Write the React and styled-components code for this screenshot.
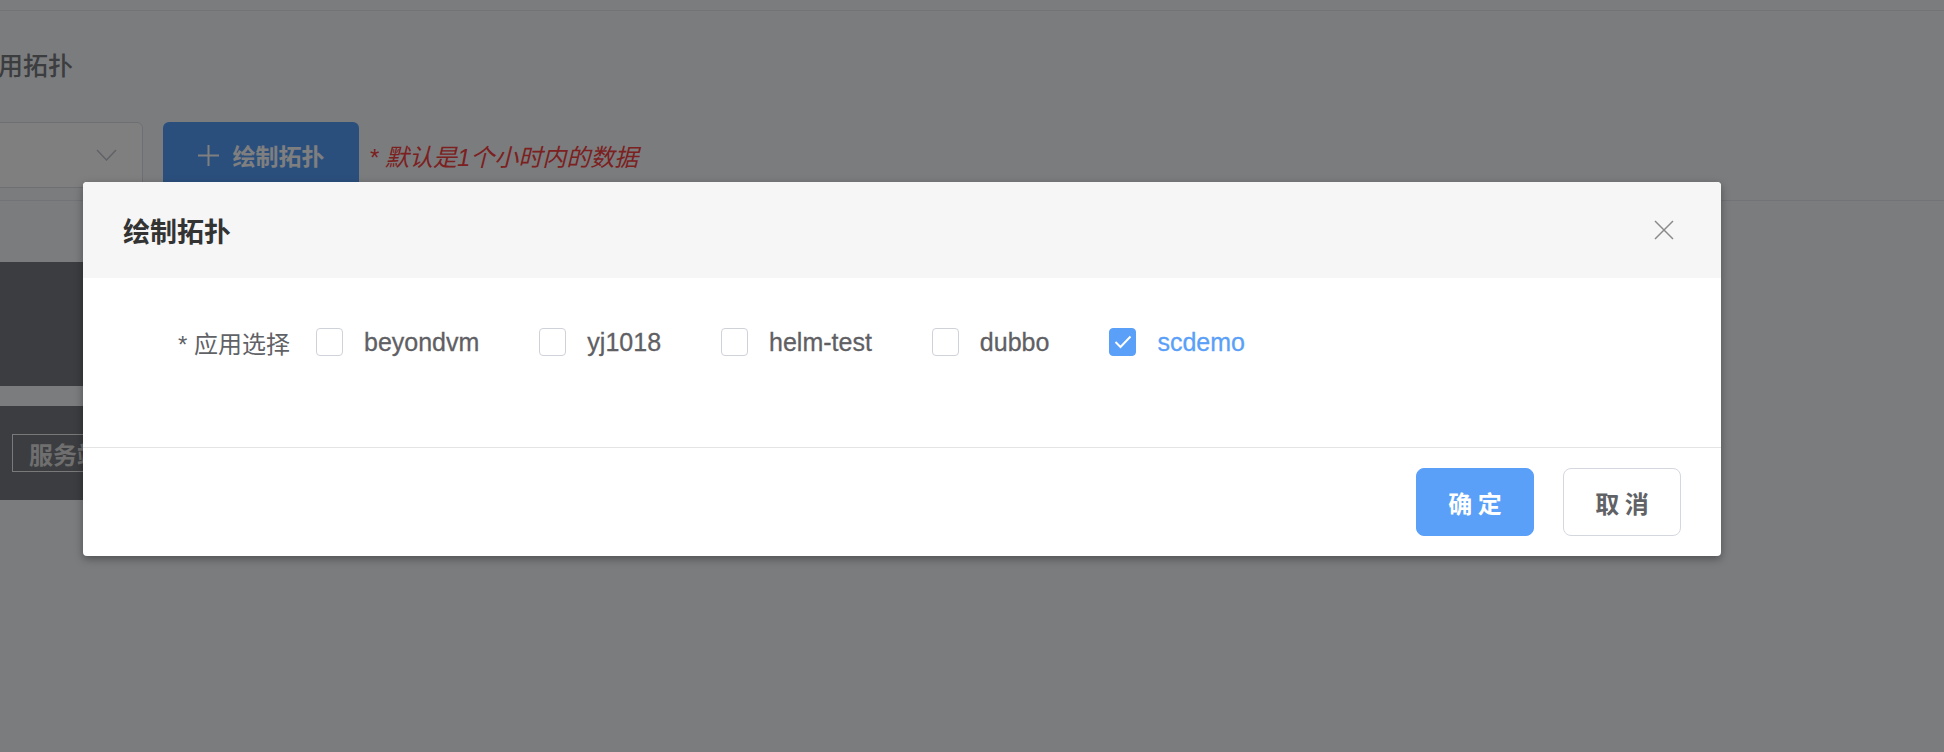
import React from "react";
import styled, { createGlobalStyle } from "styled-components";

const GlobalStyle = createGlobalStyle`
  html, body {
    margin: 0;
    padding: 0;
    overflow: hidden;
    background: #f6f8fd;
  }
  body {
    font-family: "Liberation Sans", "Noto Sans CJK SC", sans-serif;
  }
`;

const Page = styled.div`
  position: relative;
  width: 1944px;
  height: 752px;
  overflow: hidden;
  background: #f6f8fd;
`;

const TopBar = styled.div`
  height: 10px;
  border-bottom: 1px solid #e6e8ee;
`;

// the page is scrolled a little to the right, so its left edge is cut off
const Content = styled.div`
  margin-left: -27px;
`;

const PageTitle = styled.h2`
  margin: 40px 0 41px;
  font-size: 25px;
  line-height: 30px;
  font-weight: 500;
  color: #777a7f;
`;

const Toolbar = styled.div`
  display: flex;
  align-items: center;
  padding-bottom: 12px;
  border-bottom: 1px solid #e3e6ee;
`;

const Select = styled.div`
  box-sizing: border-box;
  width: 170px;
  height: 66px;
  display: flex;
  align-items: center;
  justify-content: flex-end;
  padding-right: 25px;
  background: #fff;
  border: 1px solid #dcdfe6;
  border-radius: 6px;
`;

const DrawButton = styled.button`
  box-sizing: border-box;
  width: 196px;
  height: 66px;
  margin-left: 20px;
  display: flex;
  align-items: center;
  justify-content: center;
  gap: 14px;
  border: none;
  border-radius: 6px;
  background: #569efa;
  color: #fff;
  font-family: "Noto Sans CJK SC", sans-serif;
  font-size: 23px;
  font-weight: 600;
`;

const Note = styled.span`
  margin-left: 10px;
  font-size: 24px;
  font-style: italic;
  color: #f84040;
`;

const Panel = styled.div`
  box-sizing: border-box;
  width: 1500px;
  height: ${(p) => p.h}px;
  margin-top: ${(p) => p.top}px;
  display: flex;
  align-items: center;
  padding-left: 39px;
  background: #787a80;
`;

const TagBox = styled.div`
  height: 36px;
  display: flex;
  align-items: center;
  padding: 0 16px;
  border: 1px solid #f2f2f2;
  font-family: "Noto Sans CJK SC", sans-serif;
  font-size: 24px;
  font-weight: 700;
  color: #dedede;
`;

const Overlay = styled.div`
  position: absolute;
  inset: 0;
  box-sizing: border-box;
  display: flex;
  align-items: flex-start;
  padding: 182px 0 0 83px;
  background: rgba(0, 0, 0, 0.5);
`;

const Dialog = styled.div`
  width: 1638px;
  background: #fff;
  border-radius: 4px;
  overflow: hidden;
  box-shadow: 0 3px 8px rgba(0, 0, 0, 0.35);
`;

const DialogHeader = styled.div`
  height: 96px;
  display: flex;
  align-items: center;
  justify-content: space-between;
  padding: 0 47px 0 40px;
  background: #f6f6f6;
`;

const DialogTitle = styled.span`
  font-family: "Noto Sans CJK SC", sans-serif;
  font-size: 27px;
  font-weight: 700;
  color: #333;
`;

const CloseBtn = styled.span`
  display: flex;
  width: 20px;
  height: 20px;
`;

const DialogBody = styled.div`
  box-sizing: border-box;
  height: 169px;
  padding: 44px 40px 0;
`;

const FormRow = styled.div`
  display: flex;
  align-items: center;
  height: 40px;
`;

const FormLabel = styled.label`
  box-sizing: border-box;
  width: 193px;
  padding-right: 26px;
  text-align: right;
  font-family: "Liberation Sans", "Noto Sans CJK SC", sans-serif;
  font-size: 24px;
  color: #606266;
`;

const CheckItem = styled.label`
  display: flex;
  align-items: center;
  margin-right: 60px;
`;

const Box = styled.span`
  box-sizing: border-box;
  width: 27px;
  height: 28px;
  display: flex;
  align-items: center;
  justify-content: center;
  border: 1px solid ${(p) => (p.checked ? "#5a9ff8" : "#cfd2d9")};
  border-radius: 4px;
  background: ${(p) => (p.checked ? "#5a9ff8" : "#fff")};
`;

const CheckText = styled.span`
  margin-left: 21px;
  font-size: 25px;
  color: ${(p) => (p.checked ? "#5a9ff8" : "#5f6064")};
  -webkit-text-stroke: 0.3px currentColor;
`;

const DialogFooter = styled.div`
  display: flex;
  justify-content: flex-end;
  gap: 29px;
  padding: 20px 40px;
  border-top: 1px solid #e4e4e4;
`;

const FooterButton = styled.button`
  box-sizing: border-box;
  width: 118px;
  height: 68px;
  border-radius: 8px;
  border: 1px solid ${(p) => (p.primary ? "#5a9ff8" : "#d4d7de")};
  background: ${(p) => (p.primary ? "#5a9ff8" : "#fff")};
  color: ${(p) => (p.primary ? "#fff" : "#606266")};
  font-family: "Noto Sans CJK SC", sans-serif;
  font-size: 24px;
  font-weight: 700;
`;

const apps = [
  { name: "beyondvm", checked: false },
  { name: "yj1018", checked: false },
  { name: "helm-test", checked: false },
  { name: "dubbo", checked: false },
  { name: "scdemo", checked: true },
];

export default function App() {
  return (
    <Page>
      <GlobalStyle />
      <TopBar />
      <Content>
        <PageTitle>应用拓扑</PageTitle>
        <Toolbar>
          <Select>
            <svg width="21" height="12" viewBox="0 0 21 12" fill="none">
              <polyline points="1,1 10.5,11 20,1" stroke="#c0c4cc" strokeWidth="1.5" />
            </svg>
          </Select>
          <DrawButton>
            <svg width="21" height="21" viewBox="0 0 21 21">
              <path d="M10.5 0v21M0 10.5h21" stroke="#fff" strokeWidth="2" />
            </svg>
            绘制拓扑
          </DrawButton>
          <Note>* 默认是1个小时内的数据</Note>
        </Toolbar>
        <Panel h={124} top={61} />
        <Panel h={94} top={20}>
          <TagBox>服务端</TagBox>
        </Panel>
      </Content>

      <Overlay>
        <Dialog>
          <DialogHeader>
            <DialogTitle>绘制拓扑</DialogTitle>
            <CloseBtn>
              <svg width="20" height="20" viewBox="0 0 20 20">
                <path d="M1 1L19 19M19 1L1 19" stroke="#8a8a8a" strokeWidth="1.5" />
              </svg>
            </CloseBtn>
          </DialogHeader>
          <DialogBody>
            <FormRow>
              <FormLabel>* 应用选择</FormLabel>
              {apps.map((a) => (
                <CheckItem key={a.name}>
                  <Box checked={a.checked}>
                    {a.checked && (
                      <svg width="18" height="14" viewBox="0 0 18 14" fill="none">
                        <polyline points="1.5,7 6.5,12 16.5,1.5" stroke="#fff" strokeWidth="2" />
                      </svg>
                    )}
                  </Box>
                  <CheckText checked={a.checked}>{a.name}</CheckText>
                </CheckItem>
              ))}
            </FormRow>
          </DialogBody>
          <DialogFooter>
            <FooterButton primary>确 定</FooterButton>
            <FooterButton>取 消</FooterButton>
          </DialogFooter>
        </Dialog>
      </Overlay>
    </Page>
  );
}
